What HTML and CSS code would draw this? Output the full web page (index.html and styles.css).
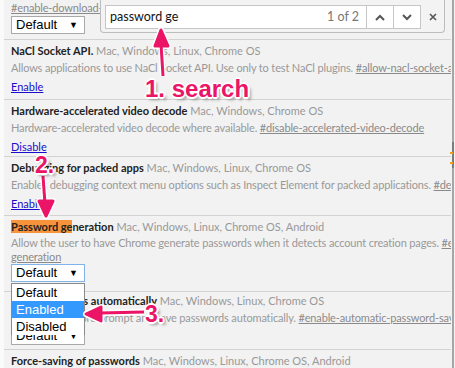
FILE: index.html
```html
<!DOCTYPE html>
<html lang="en">
<head>
    <meta charset="UTF-8">
    <title>Flags</title>
    <link rel="stylesheet" href="styles.css">
</head>
<body>

<div class="flags">
    <div class="experiment top">
        <div class="desc"><a class="perm">#enable-download-resumption</a></div>
        <div class="choice">Default <span class="caret">&#9660;</span></div>
    </div>

    <div class="experiment nacl">
        <div class="title"><span class="name">NaCl Socket API.</span> Mac, Windows, Linux, Chrome OS</div>
        <div class="desc">Allows applications to use NaCl Socket API. Use only to test NaCl plugins. <a class="perm">#allow-nacl-socket-api</a></div>
        <a class="action">Enable</a>
    </div>

    <div class="experiment video">
        <div class="title"><span class="name">Hardware-accelerated video decode</span> Mac, Windows, Chrome OS</div>
        <div class="desc">Hardware-accelerated video decode where available. <a class="perm">#disable-accelerated-video-decode</a></div>
        <a class="action">Disable</a>
    </div>

    <div class="experiment debug">
        <div class="title"><span class="name">Debugging for packed apps</span> Mac, Windows, Linux, Chrome OS</div>
        <div class="desc">Enables debugging context menu options such as Inspect Element for packed applications. <a class="perm">#debug-packed-apps</a></div>
        <a class="action">Enable</a>
    </div>

    <div class="experiment generation">
        <div class="title"><span class="name"><span class="match">Password ge</span>neration</span> Mac, Windows, Linux, Chrome OS, Android</div>
        <div class="desc">Allow the user to have Chrome generate passwords when it detects account creation pages. <a class="perm">#enable-password-</a><br><a class="perm">generation</a></div>
        <div class="choice focused">Default <span class="caret">&#9660;</span></div>
    </div>

    <div class="experiment saving">
        <div class="title"><span class="name">Save passwords automatically</span> Mac, Windows, Linux, Chrome OS</div>
        <div class="desc">Skip the password prompt and save passwords automatically. <a class="perm">#enable-automatic-password-saving</a></div>
        <div class="choice">Default <span class="caret">&#9660;</span></div>
    </div>

    <div class="experiment">
        <div class="title"><span class="name">Force-saving of passwords</span> Mac, Windows, Linux, Chrome OS, Android</div>
        <div class="desc">Allow the user to manually enforce password saving.</div>
    </div>
</div>

<!-- open dropdown of the focused select -->
<div class="options">
    <div class="option">Default</div>
    <div class="option picked">Enabled</div>
    <div class="option">Disabled</div>
</div>

<!-- find in page bar -->
<div class="findbar">
    <div class="findbox">
        <span class="query">password ge</span>
        <span class="count">1 of 2</span>
        <span class="findbtn">
            <svg width="10" height="7" viewBox="0 0 10 7"><polyline points="1,6 5,2 9,6" fill="none" stroke="#555" stroke-width="2"/></svg>
        </span>
        <span class="findbtn">
            <svg width="10" height="7" viewBox="0 0 10 7"><polyline points="1,1 5,5 9,1" fill="none" stroke="#555" stroke-width="2"/></svg>
        </span>
    </div>
    <span class="close">
        <svg width="8" height="8" viewBox="0 0 8 8"><path d="M1 1 L7 7 M7 1 L1 7" stroke="#555" stroke-width="1.6"/></svg>
    </span>
</div>

<div class="scrollbar">
    <div class="thumb"></div>
    <span class="tick one"></span>
    <span class="tick two"></span>
</div>

<!-- annotations -->
<svg class="arrows" width="455" height="368" viewBox="0 0 455 368">
    <g stroke="#fff" stroke-width="6" fill="#fff" stroke-linejoin="round">
        <line x1="163" y1="76" x2="161" y2="44"/>
        <polygon points="161,30 155,46 168,46"/>
        <line x1="43" y1="176" x2="45" y2="204"/>
        <polygon points="46,216 39,201 53,201"/>
        <line x1="144" y1="312" x2="100" y2="313"/>
        <polygon points="86,314 101,307 101,321"/>
    </g>
    <g stroke="#eb1466" stroke-width="3" fill="#eb1466" stroke-linejoin="round">
        <line x1="163" y1="76" x2="161" y2="44"/>
        <polygon points="161,30 155,46 168,46"/>
        <line x1="43" y1="176" x2="45" y2="204"/>
        <polygon points="46,216 39,201 53,201"/>
        <line x1="144" y1="312" x2="100" y2="313"/>
        <polygon points="86,314 101,307 101,321"/>
    </g>
</svg>
<div class="note one">1. search</div>
<div class="note two">2.</div>
<div class="note three">3.</div>

</body>
</html>
```

FILE: styles.css
```css
 body {
     margin: 0;
     width: 455px;
     height: 368px;
     overflow: hidden;
     position: relative;
     background: linear-gradient(to right, #fafafa 4px, #f2f2f2 4px);
     font-family: 'Lato', sans-serif;
     font-size: 11px;
     color: #999;
 }

 .flags {
     margin-left: 4px;
     width: 447px;
     overflow: hidden;
 }

 .experiment {
     border-bottom: 1px solid #d2d2d2;
     padding: 2px 0 3px 7px;
     white-space: nowrap;
 }

 .experiment.top {
     padding-top: 0;
     padding-bottom: 5px;
 }

 .experiment.nacl { padding-bottom: 4px; }
 .experiment.video { padding-bottom: 1px; }
 .experiment.debug { padding-bottom: 3px; }
 .experiment.generation { padding-bottom: 9px; }
 .experiment.generation .desc { line-height: 14px; }
 .experiment.generation .choice { margin-top: 0; }
 .experiment.saving { padding-top: 0; padding-bottom: 4px; }
 .experiment.saving .choice { margin-top: 2px; }

 .title {
     line-height: 18px;
 }

 .name {
     color: #222;
     font-weight: bold;
 }

 .match {
     background-color: #f7933b;
 }

 .desc {
     line-height: 15px;
     letter-spacing: -0.15px;
 }

 .perm {
     color: #8a8a8a;
     text-decoration: underline;
 }

 .action {
     display: inline-block;
     margin-top: 3px;
     line-height: 17px;
     color: #1a0dcc;
     text-decoration: underline;
 }

 .choice {
     position: relative;
     box-sizing: border-box;
     width: 74px;
     height: 18px;
     margin-top: 1px;
     padding-left: 4px;
     border: 1px solid #a9a9a9;
     background: white;
     font-family: 'Liberation Sans', sans-serif;
     font-size: 13px;
     line-height: 16px;
     letter-spacing: 0;
     color: black;
 }

 .choice.focused {
     border-color: #7eb4ea;
 }

 .caret {
     position: absolute;
     right: 6px;
     top: 0;
     font-size: 9px;
 }

 .options {
     position: absolute;
     left: 11px;
     top: 283px;
     width: 72px;
     border: 1px solid #8a8a8a;
     border-bottom: none;
     background: white;
     font-family: 'Liberation Sans', sans-serif;
     font-size: 13px;
     color: black;
 }

 .option {
     height: 17px;
     line-height: 17px;
     padding-left: 4px;
 }

 .option.picked {
     background-color: #3399ff;
     color: white;
 }

 .findbar {
     position: absolute;
     left: 100px;
     top: -2px;
     width: 345px;
     height: 35px;
     display: flex;
     align-items: center;
     padding-left: 4px;
     box-sizing: border-box;
     border: 1px solid #bdbdbd;
     border-top: none;
     border-radius: 0 0 4px 4px;
     background: #f3f3f3;
 }

 .findbox {
     display: flex;
     align-items: stretch;
     width: 316px;
     height: 24px;
     margin-top: 4px;
     box-sizing: border-box;
     border: 1px solid #c6c6c6;
     background: white;
     font-family: 'Lato', sans-serif;
     font-size: 12.5px;
 }

 .query {
     flex: 1;
     padding-left: 4px;
     line-height: 22px;
     color: #111;
 }

 .count {
     padding-right: 7px;
     line-height: 22px;
     color: #777;
 }

 .findbtn {
     width: 26px;
     display: flex;
     align-items: center;
     justify-content: center;
     border-left: 1px solid #c6c6c6;
 }

 .close {
     flex: 1;
     display: flex;
     justify-content: center;
     margin-top: 4px;
 }

 .scrollbar {
     position: absolute;
     left: 452px;
     top: 0;
     width: 2px;
     height: 368px;
     background: #a6a6a6;
 }

 .thumb {
     position: absolute;
     left: 0;
     top: 142px;
     width: 2px;
     height: 26px;
     background: #7c7c7c;
 }

 .tick {
     position: absolute;
     left: -2px;
     width: 3px;
     height: 2px;
     background: #f0a020;
 }

 .tick.one { top: 152px; }
 .tick.two { top: 162px; }

 .arrows {
     position: absolute;
     left: 0;
     top: 0;
 }

 .note {
     position: absolute;
     font-family: 'Liberation Sans', sans-serif;
     font-weight: bold;
     font-size: 24px;
     line-height: 24px;
     color: #eb1466;
     text-shadow: -1px -1px 0 #fff, 1px -1px 0 #fff, -1px 1px 0 #fff, 1px 1px 0 #fff,
                  0 -2px 0 #fff, 0 2px 0 #fff, -2px 0 0 #fff, 2px 0 0 #fff,
                  3px 3px 3px rgba(0, 0, 0, 0.35);
 }

 .note.one { left: 145px; top: 77px; }
 .note.two { left: 35px; top: 153px; font-size: 23px; }
 .note.three { left: 145px; top: 302px; font-size: 23px; }
```
